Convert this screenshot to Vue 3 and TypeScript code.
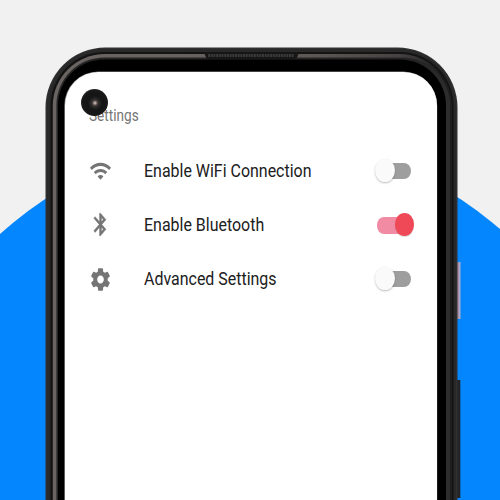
<script setup lang="ts">
import { ref } from 'vue'

interface Setting {
  id: string
  label: string
  icon: string
  enabled: boolean
}

const settings = ref<Setting[]>([
  {
    id: 'wifi',
    label: 'Enable WiFi Connection',
    icon: 'M1 9l2 2c4.97-4.97 13.03-4.97 18 0l2-2C16.93 2.93 7.08 2.93 1 9zm8 8l3 3 3-3c-1.65-1.66-4.34-1.66-6 0zm-4-4l2 2c2.76-2.76 7.24-2.76 10 0l2-2C15.14 9.14 8.87 9.14 5 13z',
    enabled: false
  },
  {
    id: 'bluetooth',
    label: 'Enable Bluetooth',
    icon: 'M17.71 7.71L12 2h-1v7.59L6.41 5 5 6.41 10.59 12 5 17.59 6.41 19 11 14.41V22h1l5.71-5.71-4.3-4.29 4.3-4.29zM13 5.83l1.88 1.88L13 9.59V5.83zm1.88 10.46L13 18.17v-3.76l1.88 1.88z',
    enabled: true
  },
  {
    id: 'advanced',
    label: 'Advanced Settings',
    icon: 'M19.43 12.98c.04-.32.07-.64.07-.98s-.03-.66-.07-.98l2.11-1.65c.19-.15.24-.42.12-.64l-2-3.46c-.12-.22-.39-.3-.61-.22l-2.49 1c-.52-.4-1.08-.73-1.69-.98l-.38-2.65C14.46 2.18 14.25 2 14 2h-4c-.25 0-.46.18-.49.42l-.38 2.65c-.61.25-1.17.59-1.69.98l-2.49-1c-.23-.09-.49 0-.61.22l-2 3.46c-.13.22-.07.49.12.64l2.11 1.65c-.04.32-.07.65-.07.98s.03.66.07.98l-2.11 1.65c-.19.15-.24.42-.12.64l2 3.46c.12.22.39.3.61.22l2.49-1c.52.4 1.08.73 1.69.98l.38 2.65c.03.24.24.42.49.42h4c.25 0 .46-.18.49-.42l.38-2.65c.61-.25 1.17-.59 1.69-.98l2.49 1c.23.09.49 0 .61-.22l2-3.46c.12-.22.07-.49-.12-.64l-2.11-1.65zM12 15.5c-1.93 0-3.5-1.57-3.5-3.5s1.57-3.5 3.5-3.5 3.5 1.57 3.5 3.5-1.57 3.5-3.5 3.5z',
    enabled: false
  }
])
</script>

<template>
  <main class="scene">
    <svg class="backdrop" viewBox="0 0 500 500" aria-hidden="true">
      <defs>
        <linearGradient id="metal" x1="46" x2="458" y1="0" y2="0" gradientUnits="userSpaceOnUse">
          <stop offset="0" stop-color="#6a6462" />
          <stop offset=".35" stop-color="#676260" />
          <stop offset=".65" stop-color="#5c5856" />
          <stop offset=".86" stop-color="#454241" />
          <stop offset=".96" stop-color="#1c1c1c" />
          <stop offset="1" stop-color="#222" />
        </linearGradient>
        <linearGradient id="lip" x1="46" x2="458" y1="0" y2="0" gradientUnits="userSpaceOnUse">
          <stop offset=".9" stop-color="#252424" />
          <stop offset="1" stop-color="#303030" />
        </linearGradient>
      </defs>
      <circle cx="252.8" cy="512.8" r="376.3" fill="#0486ff" />
      <rect x="457" y="262" width="2" height="57" fill="#a78ea2" />
      <rect x="459" y="262" width="1.5" height="57" fill="#a9a9d0" />
      <rect x="456" y="380" width="4.3" height="118" fill="#242424" />
      <rect x="45.5" y="47.5" width="412" height="600" rx="60" fill="#303030" />
      <rect x="47" y="49" width="409" height="600" rx="58" fill="#292929" />
      <rect x="50.5" y="52" width="403" height="600" rx="54" fill="#141414" />
      <rect x="52.8" y="54" width="399" height="600" rx="52" fill="url(#metal)" />
      <rect x="56.4" y="57.4" width="393.6" height="600" rx="48" fill="url(#lip)" />
      <rect x="58" y="59.5" width="388" height="600" rx="46" fill="#000" />
      <path d="M204 52.5h95l-2 5q-1 1.5-3 1.5h-85q-2 0-3-1.5z" fill="#171717" />
      <path d="M208 55.5h86" stroke="#3b3a39" stroke-width="3" stroke-dasharray="2 .7" />
      <rect x="64.3" y="71.5" width="372.9" height="600" rx="34" fill="#858585" />
      <rect x="65" y="72" width="372" height="600" rx="33.5" fill="#fff" />
    </svg>

    <section class="screen">
      <h1 class="title"><span class="title-text">Settings</span></h1>
      <ul class="list">
        <li v-for="item in settings" :key="item.id" class="row">
          <svg class="icon" :class="item.id" viewBox="0 0 24 24" preserveAspectRatio="none" aria-hidden="true">
            <path :d="item.icon" />
          </svg>
          <span class="label"><span class="label-text">{{ item.label }}</span></span>
          <button
            class="switch"
            :class="{ on: item.enabled }"
            type="button"
            role="switch"
            :aria-label="item.label"
            :aria-checked="item.enabled"
            @click="item.enabled = !item.enabled"
          >
            <span class="track"></span>
            <span class="thumb"></span>
          </button>
        </li>
      </ul>
    </section>
    <span class="camera"></span>
  </main>
</template>

<style>
body {
  margin: 0;
  overflow: hidden;
}
</style>

<style scoped>
.scene {
  position: relative;
  width: 500px;
  height: 500px;
  overflow: hidden;
  background: #f1f1f1;
  font-family: Roboto, sans-serif;
}

.backdrop {
  position: absolute;
  inset: 0;
  width: 500px;
  height: 500px;
}

.screen {
  position: relative;
  box-sizing: border-box;
  width: 372px;
  margin-left: 65px;
  padding: 103px 23px 0 23.5px;
}

.title {
  height: 24px;
  margin: 0 0 17px;
  color: #757575;
  font-size: 17px;
  font-weight: 400;
  line-height: 24px;
}

.title-text,
.label-text {
  display: inline-block;
  white-space: nowrap;
  transform-origin: left center;
}

.title-text {
  transform: scaleX(0.8);
}

.label-text {
  transform: scaleX(0.84);
}

.list {
  margin: 0;
  padding: 0;
  list-style: none;
}

.row {
  display: flex;
  align-items: center;
  height: 54px;
}

.icon {
  flex: none;
  width: 23px;
  height: 27px;
  margin-right: 32px;
  fill: #757575;
}

.icon.wifi {
  height: 26px;
  padding-bottom: 1px;
}

.icon.bluetooth {
  padding-bottom: 2px;
  stroke: #757575;
  stroke-width: 0.4;
}

.label {
  flex: 1;
  padding-bottom: 2px;
  color: #202020;
  font-size: 19px;
  line-height: 27px;
}

.switch {
  position: relative;
  flex: none;
  width: 40px;
  height: 24px;
  padding: 0;
  border: 0;
  background: none;
}

.track {
  position: absolute;
  top: 4px;
  left: 3px;
  width: 34px;
  height: 16px;
  border-radius: 7px / 8px;
  background: #9e9e9e;
}

.thumb {
  position: absolute;
  top: 0;
  left: 1px;
  width: 19.5px;
  height: 23px;
  border-radius: 50%;
  background: #fafafa;
  box-shadow: 0 1px 2px rgb(0 0 0 / 26%);
}

.on .track {
  height: 17px;
  background: #f18ba4;
}

.on .thumb {
  left: 20.5px;
  background: #ef4958;
  box-shadow: 0 1px 1px rgb(0 0 0 / 15%);
}

.camera {
  position: absolute;
  top: 88.5px;
  left: 81px;
  width: 27px;
  height: 27px;
  border-radius: 50%;
  background: radial-gradient(circle at 14px 14px, #b5a7a5 0 1px, #655450 2px, #302d2d 3.5px, #232323 5px, #151515 7px, #171717 12px, #222 13.5px);
}
</style>
